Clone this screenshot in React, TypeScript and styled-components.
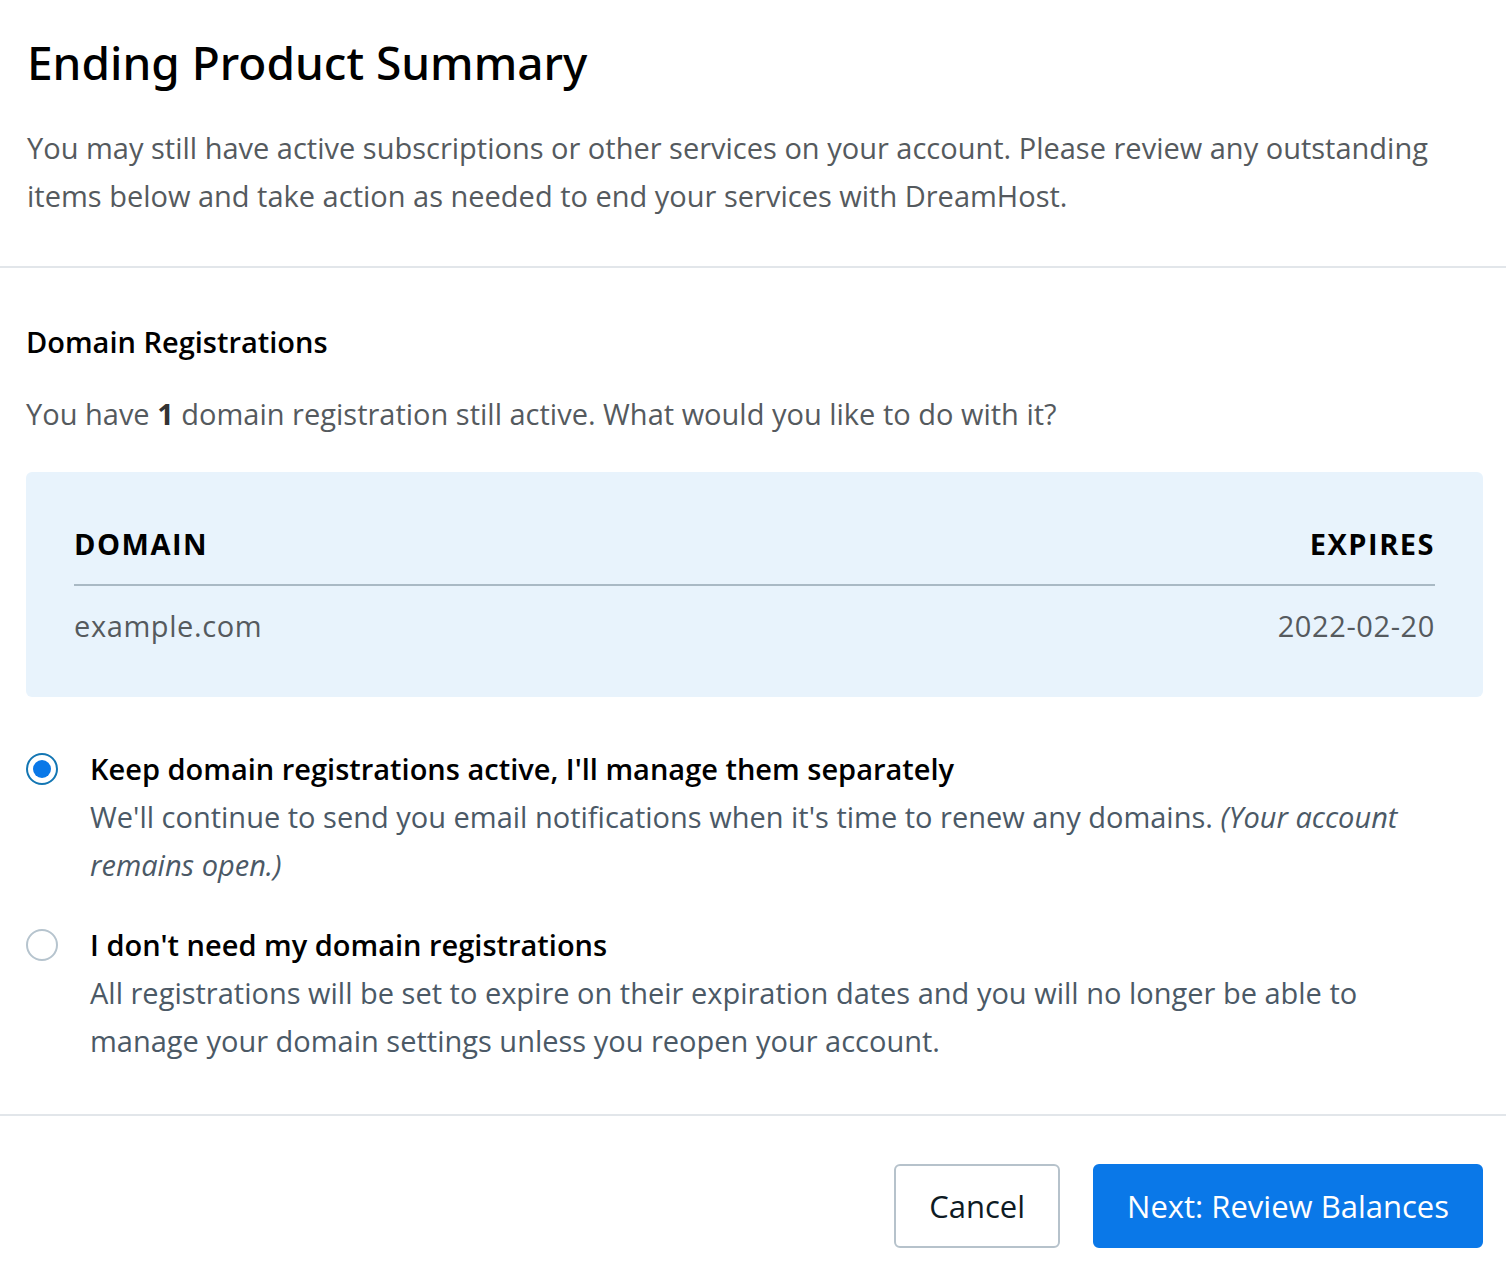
import React, { useState } from "react";
import styled, { createGlobalStyle } from "styled-components";

const Global = createGlobalStyle`
  html, body { margin: 0; padding: 0; background: #fff; }
  body { font-family: "Open Sans", Lato, sans-serif; color: #000; }
  * { box-sizing: border-box; }
`;

const Page = styled.div`
  width: 1506px;
  min-height: 1274px;
  background: #fff;
  display: flex;
  flex-direction: column;
`;

const Header = styled.header`
  padding: 30px 23px 46px 27px;
  border-bottom: 2px solid #e2e6ea;
`;

const Title = styled.h1`
  margin: 0 0 30px;
  font-family: "Noto Sans", "Open Sans", sans-serif;
  font-weight: 500;
  font-size: 46px;
  line-height: 64px;
  color: #000;
`;

const Lead = styled.p`
  margin: 0;
  font-size: 29px;
  line-height: 48px;
  color: #555a5e;
`;

const Body = styled.section`
  padding: 50px 23px 49px 26px;
  border-bottom: 2px solid #e2e6ea;
`;

const SectionTitle = styled.h2`
  margin: 0 0 24px;
  font-size: 29px;
  font-weight: 600;
  line-height: 48px;
  color: #000;
`;

const Intro = styled.p`
  margin: 0 0 34px;
  font-size: 29px;
  line-height: 48px;
  color: #555a5e;
  b { color: #333; font-weight: 700; }
`;

const DomainBox = styled.div`
  background: #e8f3fc;
  border-radius: 6px;
  padding: 52px 48px 51px;
`;

const Row = styled.div<{ $head?: boolean }>`
  display: flex;
  justify-content: space-between;
  align-items: center;
  font-size: 29px;
  font-weight: ${(p) => (p.$head ? 700 : 500)};
  color: ${(p) => (p.$head ? "#000" : "#555a5e")};
  letter-spacing: ${(p) => (p.$head ? "1.5px" : "0.6px")};
  line-height: 40px;
  padding: ${(p) => (p.$head ? "0 0 20px" : "20px 0 0")};
  border-bottom: ${(p) => (p.$head ? "2px solid #a9b9c4" : "none")};
`;

const Options = styled.div`
  margin-top: 48px;
  padding-right: 24px;
  display: flex;
  flex-direction: column;
  gap: 32px;
`;

const Option = styled.label`
  display: grid;
  grid-template-columns: 64px 1fr;
  cursor: pointer;
`;

const Radio = styled.span<{ $checked?: boolean }>`
  margin-top: 8px;
  width: 32px;
  height: 32px;
  border-radius: 50%;
  border: 2px solid ${(p) => (p.$checked ? "#1376b3" : "#b6c4ce")};
  background: #fff;
  display: flex;
  align-items: center;
  justify-content: center;
  &::after {
    content: "";
    width: 18px;
    height: 18px;
    border-radius: 50%;
    background: ${(p) => (p.$checked ? "#0a78e8" : "transparent")};
  }
`;

const OptionText = styled.div`
  display: flex;
  flex-direction: column;
`;

const OptionLabel = styled.span`
  font-size: 29px;
  font-weight: 600;
  line-height: 48px;
  color: #000;
`;

const OptionDesc = styled.span`
  font-size: 29px;
  line-height: 48px;
  color: #4b5966;
  em { font-style: italic; }
`;

const Footer = styled.footer`
  display: flex;
  justify-content: flex-end;
  gap: 33px;
  padding: 48px 23px 26px 26px;
`;

const Button = styled.button<{ $primary?: boolean }>`
  height: 84px;
  padding: 0 ${(p) => (p.$primary ? "32px" : "33px")};
  border-radius: 6px;
  font-family: "Open Sans", Lato, sans-serif;
  font-size: 31px;
  font-weight: 500;
  border: 2px solid ${(p) => (p.$primary ? "#0a78e8" : "#b6c2cb")};
  background: ${(p) => (p.$primary ? "#0a78e8" : "#fff")};
  color: ${(p) => (p.$primary ? "#fff" : "#0e1b24")};
  cursor: pointer;
`;

export default function App() {
  const [choice, setChoice] = useState(0);
  return (
    <Page>
      <Global />
      <Header>
        <Title>Ending Product Summary</Title>
        <Lead>
          You may still have active subscriptions or other services on your account. Please review any outstanding
          items below and take action as needed to end your services with DreamHost.
        </Lead>
      </Header>
      <Body>
        <SectionTitle>Domain Registrations</SectionTitle>
        <Intro>
          You have <b>1</b> domain registration still active. What would you like to do with it?
        </Intro>
        <DomainBox>
          <Row $head>
            <span>DOMAIN</span>
            <span>EXPIRES</span>
          </Row>
          <Row>
            <span>example.com</span>
            <span>2022-02-20</span>
          </Row>
        </DomainBox>
        <Options>
          <Option onClick={() => setChoice(0)}>
            <Radio $checked={choice === 0} />
            <OptionText>
              <OptionLabel>Keep domain registrations active, I'll manage them separately</OptionLabel>
              <OptionDesc>
                We'll continue to send you email notifications when it's time to renew any domains.{" "}
                <em>(Your account remains open.)</em>
              </OptionDesc>
            </OptionText>
          </Option>
          <Option onClick={() => setChoice(1)}>
            <Radio $checked={choice === 1} />
            <OptionText>
              <OptionLabel>I don't need my domain registrations</OptionLabel>
              <OptionDesc>
                All registrations will be set to expire on their expiration dates and you will no longer be able to
                manage your domain settings unless you reopen your account.
              </OptionDesc>
            </OptionText>
          </Option>
        </Options>
      </Body>
      <Footer>
        <Button>Cancel</Button>
        <Button $primary>Next: Review Balances</Button>
      </Footer>
    </Page>
  );
}
